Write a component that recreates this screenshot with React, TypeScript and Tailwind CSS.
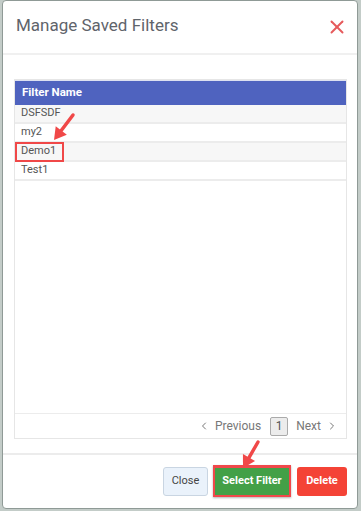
import {X, ChevronLeft, ChevronRight} from "lucide-react";

const rows = ["DSFSDF", "my2", "Demo1", "Test1"]

function Arrow({x1, y1, x2, y2}: { x1: number, y1: number, x2: number, y2: number }) {
    // red callout arrow with a filled head at (x2, y2)
    const ang = Math.atan2(y2 - y1, x2 - x1)
    const len = 12
    const w = 7
    const bx = x2 - Math.cos(ang) * len
    const by = y2 - Math.sin(ang) * len
    const px = -Math.sin(ang) * w
    const py = Math.cos(ang) * w
    return (
        <g>
            <line x1={x1} y1={y1} x2={bx} y2={by} stroke="#f04848" strokeWidth={3.5} strokeLinecap="round"/>
            <polygon points={`${x2},${y2} ${bx + px},${by + py} ${bx - px},${by - py}`} fill="#f04848"/>
        </g>
    )
}

export default function App() {
    return (
        <div className="relative w-[361px] h-[511px] bg-[#c3ccc8] pl-[2px] pr-[3px] pb-[2px]"
             style={{fontFamily: 'Roboto, "Liberation Sans", sans-serif'}}>
            <div className="h-full flex flex-col bg-white border border-[#8f9a96] rounded-[4px]">
                {/* header */}
                <div className="h-[54px] flex items-start justify-between pl-[13px] pr-[9px] pt-[13px] border-b-2 border-[#f0f0f0]">
                    <div className="text-[17px] leading-[22px] text-[#5f646b]">Manage Saved Filters</div>
                    <X className="w-[22px] h-[22px] mt-[2px] text-[#e65a5c]" strokeWidth={2.1}/>
                </div>

                {/* body */}
                <div className="pt-[24px] pl-[11px] pr-[10px]">
                    <div className="h-[360px] flex flex-col border border-[#e6e6e6]">
                        <div className="h-[25px] flex items-center bg-[#4f63bf] px-[7px] text-[11.5px] font-bold text-white border-t border-[#dde1f1]">
                            Filter Name
                        </div>
                        {rows.map((r, i) =>
                            <div key={i}
                                 className={`h-[19px] flex items-center px-[6px] text-[11px] text-[#555] border-b-2 border-[#ececec] ${i % 2 === 0 ? 'bg-[#f7f7f7]' : 'bg-white'}`}>
                                {r}
                            </div>)}
                        <div className="flex-1 border-b border-[#ececec]"/>
                        <div className="h-[24px] flex items-center justify-end pr-[8px] text-[12px] text-[#777]">
                            <ChevronLeft className="w-[12px] h-[12px] mr-[5px]" strokeWidth={2}/>
                            <span>Previous</span>
                            <span className="ml-[9px] mr-[8px] w-[18px] h-[19px] flex items-center justify-center border border-[#aaa] bg-[#ececec] rounded-[2px] text-[#555]">1</span>
                            <span>Next</span>
                            <ChevronRight className="w-[12px] h-[12px] ml-[5px]" strokeWidth={2}/>
                        </div>
                    </div>
                </div>

                {/* footer */}
                <div className="mt-[14px] border-t-2 border-[#ececec] flex-1 flex items-start justify-end gap-[5px] pr-[10px] pt-[12px]">
                    <button className="h-[29px] w-[45px] text-[11px] text-[#444] bg-[#eaf2fb] border border-[#c9d5e2] rounded-[3px]">Close</button>
                    <div className="p-[2px] bg-[#f0484b] -mt-[2px] shadow-[0_1px_2px_rgba(0,0,0,0.3)]">
                        <button className="h-[27px] w-[74px] text-[11px] font-bold text-white bg-[#43a047]">Select Filter</button>
                    </div>
                    <button className="h-[29px] w-[50px] text-[11px] font-bold text-white bg-[#f44336] rounded-[3px] ml-[1px]">Delete</button>
                </div>
            </div>

            {/* callouts */}
            <div className="absolute left-[15px] top-[142px] w-[49px] h-[20px] border-2 border-[#f04848]"/>
            <svg className="absolute left-0 top-0 pointer-events-none" width={361} height={511}>
                <Arrow x1={73} y1={115} x2={54} y2={140}/>
                <Arrow x1={258} y1={442} x2={243} y2={468}/>
            </svg>
        </div>
    )
}
